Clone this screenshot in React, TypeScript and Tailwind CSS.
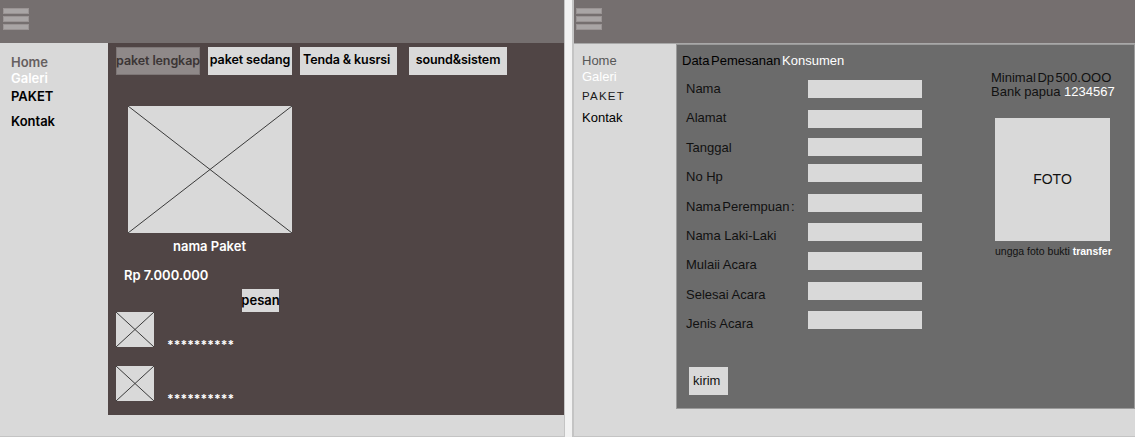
import React from 'react';

const Hamburger = () => (
  <div className="flex flex-col gap-[2px]">
    {[0, 1, 2].map((i) => (
      <div key={i} className="w-[26px] h-[6px] bg-[#a9a5a5] border border-[#9a9494]" />
    ))}
  </div>
);

const Placeholder = ({ w, h }: { w: number; h: number }) => (
  <svg width={w} height={h} viewBox={`0 0 ${w} ${h}`} className="block">
    <rect x="0" y="0" width={w} height={h} fill="#d9d9d9" />
    <line x1="0" y1="0" x2={w} y2={h} stroke="#3a3a3a" strokeWidth="1" />
    <line x1={w} y1="0" x2="0" y2={h} stroke="#3a3a3a" strokeWidth="1" />
  </svg>
);

const tabs = [
  { name: 'paket lengkap', cls: 'w-[84px] bg-[#8f8989] border border-[#7d7676] text-[#3b3535] justify-center' },
  { name: 'paket sedang', cls: 'w-[84px] ml-[8px] bg-[#d9d9d9] text-black justify-center' },
  { name: 'Tenda & kusrsi', cls: 'w-[97px] ml-[8px] bg-[#d9d9d9] text-black justify-start pl-[3px]' },
  { name: 'sound&sistem', cls: 'w-[98px] ml-[12px] bg-[#d9d9d9] text-black justify-center' },
];

const LeftFrame = () => (
  <div className="w-[565px] h-[437px] flex flex-col border-r border-b border-[#c4c4c4] font-['Inter',sans-serif]">
    <div className="h-[43px] bg-[#756f6f] pl-[3px] pt-[8px] shrink-0">
      <Hamburger />
    </div>
    <div className="flex-1 flex bg-[#d9d9d9]">
      {/* sidebar */}
      <div className="w-[108px] pl-[11px] pt-[11px] text-[13px] font-semibold leading-[16px]">
        <div className="text-[#666060]">Home</div>
        <div className="text-white">Galeri</div>
        <div className="text-black mt-[2px]">PAKET</div>
        <div className="text-black mt-[9px]">Kontak</div>
      </div>

      {/* main */}
      <div className="w-[456px] h-[372px] bg-[#504545] flex flex-col">
        <div className="flex pt-[4px] pl-[8px]">
          {tabs.map((t) => (
            <div key={t.name} className={`h-[28px] flex items-start pt-[4px] text-[12.5px] tracking-[-0.1px] font-semibold whitespace-nowrap ${t.cls}`}>
              {t.name}
            </div>
          ))}
        </div>

        <div className="mt-[31px] ml-[20px]">
          <Placeholder w={164} h={127} />
        </div>
        <div className="mt-[5px] ml-[65px] text-white text-[13px] font-semibold leading-[16px]">nama Paket</div>
        <div className="mt-[13px] ml-[16px] text-white text-[13px] font-semibold leading-[16px]">Rp 7.000.000</div>
        <div className="mt-[6px] ml-[134px] w-[37px] h-[23px] bg-[#d9d9d9] flex items-center justify-center text-[13px] font-semibold text-black">
          pesan
        </div>

        <div className="flex items-end ml-[8px]">
          <Placeholder w={38} h={35} />
          <div className="ml-[13px] mb-[-6px] text-white text-[12px] font-bold leading-[16px]">**********</div>
        </div>
        <div className="flex items-end ml-[8px] mt-[19px]">
          <Placeholder w={38} h={35} />
          <div className="ml-[13px] mb-[-6px] text-white text-[12px] font-bold leading-[16px]">**********</div>
        </div>
      </div>
    </div>
  </div>
);

const fields = [
  { label: 'Nama', input: 'mt-[12px]', tight: false },
  { label: 'Alamat', input: 'mt-[12px]', tight: false },
  { label: 'Tanggal', input: 'mt-[10px]', tight: false },
  { label: 'No Hp', input: 'mt-[8px]', tight: false },
  { label: 'Nama Perempuan :', input: 'mt-[12px]', tight: true },
  { label: 'Nama Laki-Laki', input: 'mt-[11px]', tight: false },
  { label: 'Mulaii Acara', input: 'mt-[11px]', tight: false },
  { label: 'Selesai Acara', input: 'mt-[12px]', tight: false },
  { label: 'Jenis Acara', input: 'mt-[11px]', tight: false },
];

const RightFrame = () => (
  <div className="ml-[7px] flex-1 h-[437px] flex flex-col border-l-2 border-b border-[#c4c4c4] font-['Liberation_Sans',Arial,sans-serif]">
    <div className="h-[44px] bg-[#756f6f] border-b border-[#a8a8a8] pl-[2px] pt-[8px] shrink-0">
      <Hamburger />
    </div>
    <div className="flex-1 flex bg-[#d9d9d9]">
      {/* sidebar */}
      <div className="w-[102px] pl-[8px] pt-[9px] text-[13px] leading-[15px]">
        <div className="text-[#575757]">Home</div>
        <div className="text-white mt-[1px]">Galeri</div>
        <div className="text-[#1a1a1a] mt-[5px] text-[11.5px] tracking-[1.2px]">PAKET</div>
        <div className="text-black mt-[6px]">Kontak</div>
      </div>

      {/* panel */}
      <div className="flex-1 h-[365px] bg-[#6b6b6b] border border-[#9a9a9a] flex">
        <div className="w-[300px] flex flex-col">
          <div className="pt-[8px] pl-[5px] text-[13px] leading-[15px] [word-spacing:-2px]">
            <span className="text-black">Data Pemesanan</span> <span className="text-white">Konsumen</span>
          </div>
          <div className="flex">
            <div className="ml-[9px] w-[122px] mt-[6px] flex flex-col">
              {fields.map((f) => (
                <div
                  key={f.label}
                  className={`h-[29.4px] leading-[29.4px] text-[13px] text-[#111111] whitespace-nowrap ${f.tight ? '[word-spacing:-2px]' : ''}`}
                >
                  {f.label}
                </div>
              ))}
            </div>
            <div className="flex flex-col">
              {fields.map((f) => (
                <div key={f.label} className={`w-[114px] h-[18px] bg-[#d9d9d9] ${f.input}`} />
              ))}
            </div>
          </div>
          <div className="mt-[28px] ml-[12px] w-[39px] h-[28px] bg-[#d9d9d9] flex items-center pl-[4px] text-[13px] text-[#111111]">
            kirim
          </div>
        </div>

        <div className="ml-[14px] flex flex-col">
          <div className="mt-[26px] text-[13px] leading-[14px] text-[#111111] [word-spacing:-2px]">
            <div>Minimal Dp 500.OOO</div>
            <div className="[word-spacing:0px]">
              Bank papua <span className="text-white">1234567</span>
            </div>
          </div>
          <div className="mt-[19px] ml-[4px] w-[115px] h-[123px] bg-[#d9d9d9] flex items-center justify-center text-[14px] text-[#111111]">
            FOTO
          </div>
          <div className="mt-[4px] ml-[4px] text-[10.5px] leading-[12px] text-[#111111] whitespace-nowrap">
            ungga foto bukti <span className="text-white font-bold">transfer</span>
          </div>
        </div>
      </div>
    </div>
  </div>
);

export default function App() {
  return (
    <div className="w-[1135px] h-[437px] flex bg-[#f2f2f2] overflow-hidden">
      <LeftFrame />
      <RightFrame />
    </div>
  );
}
